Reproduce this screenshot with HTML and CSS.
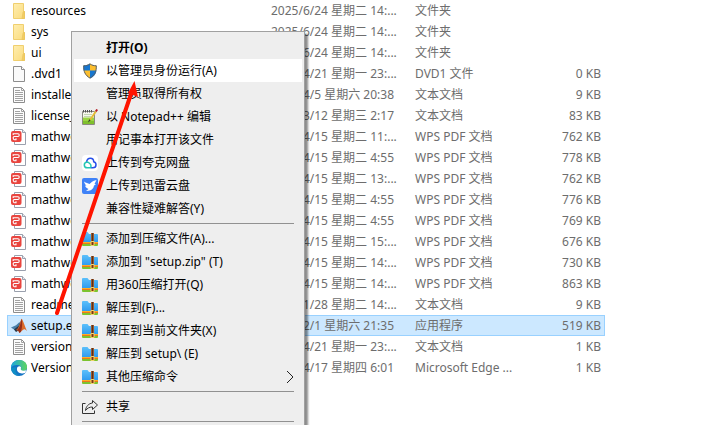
FILE: index.html
```html
<!DOCTYPE html>
<html lang="zh-CN">
<head>
<meta charset="utf-8">
<meta name="viewport" content="width=device-width, initial-scale=1">
<title>setup</title>
<link rel="stylesheet" href="styles.css">
</head>
<body>
<svg class="defs" aria-hidden="true">
  <defs>
    <linearGradient id="gFolder" x1="0" y1="0" x2="1" y2="1"><stop offset="0" stop-color="#ffeeb0"/><stop offset="1" stop-color="#fadb7c"/></linearGradient>
    <linearGradient id="gZip" x1="0" y1="0" x2="0" y2="1"><stop offset="0" stop-color="#5cc0fb"/><stop offset="1" stop-color="#2c98ee"/></linearGradient>
    <linearGradient id="gEdge" x1="0" y1="0" x2="1" y2="0"><stop offset="0" stop-color="#1ba6e0"/><stop offset="1" stop-color="#5dd55e"/></linearGradient>
    <symbol id="folder" viewBox="0 0 16 16"><path d="M2.500.5h10v8h1v7h-11z" fill="url(#gFolder)" stroke="#f0cf6e"/><path d="M12 9.500l-1 6h2.500v-7h-1z" fill="#f3cd62" stroke="#e8c25a" stroke-width=".6"/></symbol>
    <symbol id="file" viewBox="0 0 16 16"><path d="M2.500.5h8l3 3v12h-11z" fill="#fafafa" stroke="#8d8d8d"/><path d="M10.500.5v3h3" fill="#fff" stroke="#8d8d8d"/></symbol>
    <symbol id="text" viewBox="0 0 16 16"><path d="M2.500.5h8l3 3v12h-11z" fill="#fcfcfc" stroke="#8d8d8d"/><path d="M10.500.5v3h3M4 3.500h5M4 5.500h8M4 7.500h8M4 9.500h8M4 11.500h8M4 13.500h8" fill="none" stroke="#a2a2a2"/></symbol>
    <symbol id="pdf" viewBox="0 0 16 16"><path d="M3.500.5h8l3 3v12h-11z" fill="#fff" stroke="#9aa0ad"/><path d="M11.500.5v3h3" fill="#e8e8ee" stroke="#9aa0ad"/><rect x="0" y="2" width="10.500" height="11" rx="2" fill="#e9453f"/><path d="M2.200 6V4.700H7q1.200 0 1.200 1.400T7 7.500H3.400q-1.200 0-1.200 1.600t1.200 1.700H5V9.300" fill="none" stroke="#fff" stroke-width="1.100"/></symbol>
    <symbol id="matlab" viewBox="0 0 16 16"><path d="M0 9.500l5-2.300L8.500 4l1.500 3-4.500 6-2.500-1.500z" fill="#4a7fa8"/><path d="M3 11.500l5-4 2.500-6 1 4-4 7-2.500 1.500z" fill="#26384b"/><path d="M10.500.8c1.500 1 3 7 5.500 12.200-2-2.200-3-2.200-4.200-1l-3.300 3c-.8-2-2-2.800-3.500-3C8 11 9 4 10.500.8z" fill="#dc6c2b"/><path d="M10.500.8C9.700 4 9.500 9.500 6 12c1.500.5 2 1.500 2.500 3l1.500-1.300C11.500 9 11.500 4 10.500.8z" fill="#96301b"/></symbol>
    <symbol id="edge" viewBox="0 0 16 16"><circle cx="8" cy="8" r="8" fill="#1474c4"/><path d="M0 8C0 3 4 0 8 0c5 0 8 3 8 7 0 3-2 4-4 4-2 0-3-1-2-2 1-2-1-4-4-4C3 5 1 6 0 8z" fill="url(#gEdge)"/><path d="M6.500 7c2-1.500 3.800-.5 3.500 1-1 2 1 3.500 5.500 2.300L14 13c-1.500.5-2.500.7-4 .3-3.500-.5-5-3.800-3.500-6.300z" fill="#fff"/><path d="M5.500 7c-2 3-1 7 3 9C4 16 0 12 0 8z" fill="#108fc5"/></symbol>
    <symbol id="shield" viewBox="0 0 16 16"><path d="M8 .5c2 1.500 4 2 6.500 2 .2 6-1.500 10-6.500 13-5-3-6.700-7-6.500-13C4 2.500 6 2 8 .5z" fill="#fdbe2d"/><path d="M8 .5v7H1.500v-5C4 2.500 6 2 8 .5zM8 7.500h6.500c-.5 4-3 6.500-6.500 8z" fill="#1676cf"/><path d="M8 .9c2 1.500 4 1.800 6.300 1.900.2 5.700-1.500 9.600-6.300 12.300C3.200 12.400 1.500 8.500 1.700 2.800 4 2.700 6 2.400 8 .9z" fill="none" stroke="#56606a"/></symbol>
    <symbol id="notepad" viewBox="0 0 16 16"><path d="M.5 2.500h12v13H.5z" fill="#f7f8ed" stroke="#8a8a80"/><path d="M1 8.500h11V15H1z" fill="#9cd642"/><path d="M1 12h11v3H1z" fill="#7fc02c"/><path d="M2 5.500h8M2 7.500h7" stroke="#c4d6b2"/><path d="M1.500 1v2.500M3.500 1v2.500M5.500 1v2.500M7.500 1v2.500M9.500 1v2.500" stroke="#555"/><path d="M13.800 2.500L8 11" stroke="#e5bd36" stroke-width="2"/><path d="M13.800 2.500L15.200.5" stroke="#b51d25" stroke-width="2"/><path d="M7.200 10.300L6 13.500l2.700-2.200z" fill="#333"/></symbol>
    <symbol id="quark" viewBox="0 0 16 16"><rect width="16" height="16" rx="4" fill="#fff"/><path d="M4.500 7C5 4.500 6.500 3.200 8.300 3.200c2 0 3.400 1.500 3.400 3.500 1.700.5 2.300 1.700 2.300 3 0 2-1.400 3.100-3.200 3.100H8.500" fill="none" stroke="#264fe9" stroke-width="1.500"/><path d="M5 7C3 7.300 2.300 8.500 2.300 9.900c0 1.800 1.400 2.900 3 2.900H8c1.500-.5 1.300-3-.3-4.300C6.800 7.500 6 7 5 7z" fill="none" stroke="#24c6b4" stroke-width="1.500"/></symbol>
    <symbol id="xunlei" viewBox="0 0 16 16"><rect width="16" height="16" rx="2" fill="#3f82f7"/><path d="M2 3.500c2 1.500 4 1.800 5.500 2.500C9 4.500 10.500 3 14.500 2L12.500 6l1.500.5-2 1c-.3 3-2.200 4.800-5.500 5.300l-2.500.2 2.500-2C4.500 10.300 3.300 9 3 7.500l1.500.3C3.200 6.500 2.300 5 2 3.500z" fill="#fff"/></symbol>
    <symbol id="zip" viewBox="0 0 16 16"><path d="M0 2q0-1 1-1h4.500L7 3h8q1 0 1 1v8H0z" fill="url(#gZip)"/><path d="M0 11h16v1.500H0z" fill="#ffad22"/><path d="M0 12h16v1H0z" fill="#e9781d"/><path d="M0 13h16v1q0 1-1 1H1q-1 0-1-1z" fill="#7cc32f"/><path d="M9 2h3v12H9z" fill="#a05a2c"/><path d="M10.500 2v8" stroke="#58301c"/><rect x="8.500" y="10" width="4" height="5" rx="1" fill="#f5d46c"/><rect x="9.500" y="11" width="2" height="3" fill="#7b3510"/></symbol>
    <symbol id="share" viewBox="0 0 16 16"><path d="M3.500 4.500h-3v10h12v-3" fill="none" stroke="#333"/><path d="M10.500 1.500l5 4.500-5 4.500V8c-3 0-5 1-7 3.500.5-4 3-7 7-7.500z" fill="none" stroke="#333" stroke-linejoin="round"/></symbol>
  </defs>
</svg>
<main class="explorer">
  <table class="files">
    <colgroup><col class="c-name"><col class="c-date"><col class="c-type"><col class="c-size"></colgroup>
    <tbody>
      <tr><td><svg class="icon"><use href="#folder"/></svg>resources</td><td>2025/6/24 星期二 14:...</td><td>文件夹</td><td></td></tr>
      <tr><td><svg class="icon"><use href="#folder"/></svg>sys</td><td>2025/6/24 星期二 14:...</td><td>文件夹</td><td></td></tr>
      <tr><td><svg class="icon"><use href="#folder"/></svg>ui</td><td>2025/6/24 星期二 14:...</td><td>文件夹</td><td></td></tr>
      <tr><td><svg class="icon"><use href="#file"/></svg>.dvd1</td><td>2025/4/21 星期一 23:...</td><td>DVD1 文件</td><td>0 KB</td></tr>
      <tr><td><svg class="icon"><use href="#text"/></svg>installer</td><td>2025/4/5 星期六 20:38</td><td>文本文档</td><td>9 KB</td></tr>
      <tr><td><svg class="icon"><use href="#text"/></svg>license_</td><td>2025/3/12 星期三 2:17</td><td>文本文档</td><td>83 KB</td></tr>
      <tr><td><svg class="icon"><use href="#pdf"/></svg>mathworks</td><td>2025/4/15 星期二 11:...</td><td>WPS PDF 文档</td><td>762 KB</td></tr>
      <tr><td><svg class="icon"><use href="#pdf"/></svg>mathworks</td><td>2025/4/15 星期二 4:55</td><td>WPS PDF 文档</td><td>778 KB</td></tr>
      <tr><td><svg class="icon"><use href="#pdf"/></svg>mathworks</td><td>2025/4/15 星期二 13:...</td><td>WPS PDF 文档</td><td>762 KB</td></tr>
      <tr><td><svg class="icon"><use href="#pdf"/></svg>mathworks</td><td>2025/4/15 星期二 4:55</td><td>WPS PDF 文档</td><td>776 KB</td></tr>
      <tr><td><svg class="icon"><use href="#pdf"/></svg>mathworks</td><td>2025/4/15 星期二 4:55</td><td>WPS PDF 文档</td><td>769 KB</td></tr>
      <tr><td><svg class="icon"><use href="#pdf"/></svg>mathworks</td><td>2025/4/15 星期二 15:...</td><td>WPS PDF 文档</td><td>676 KB</td></tr>
      <tr><td><svg class="icon"><use href="#pdf"/></svg>mathworks</td><td>2025/4/15 星期二 14:...</td><td>WPS PDF 文档</td><td>730 KB</td></tr>
      <tr><td><svg class="icon"><use href="#pdf"/></svg>mathworks</td><td>2025/4/15 星期二 14:...</td><td>WPS PDF 文档</td><td>863 KB</td></tr>
      <tr><td><svg class="icon"><use href="#text"/></svg>readme</td><td>2025/1/28 星期二 14:...</td><td>文本文档</td><td>9 KB</td></tr>
      <tr class="selected"><td><svg class="icon"><use href="#matlab"/></svg>setup.exe</td><td>2025/2/1 星期六 21:35</td><td>应用程序</td><td>519 KB</td></tr>
      <tr><td><svg class="icon"><use href="#text"/></svg>version</td><td>2025/4/21 星期一 23:...</td><td>文本文档</td><td>1 KB</td></tr>
      <tr><td><svg class="icon"><use href="#edge"/></svg>Version</td><td>2025/4/17 星期四 6:01</td><td>Microsoft Edge ...</td><td>1 KB</td></tr>
    </tbody>
  </table>
</main>
<div class="menu" role="menu">
  <button class="item default" role="menuitem"><span class="icon"></span>打开(O)</button>
  <button class="item active" role="menuitem"><svg class="icon"><use href="#shield"/></svg>以管理员身份运行(A)</button>
  <button class="item" role="menuitem"><span class="icon"></span>管理员取得所有权</button>
  <button class="item" role="menuitem"><svg class="icon"><use href="#notepad"/></svg>以 Notepad++ 编辑</button>
  <button class="item" role="menuitem"><span class="icon"></span>用记事本打开该文件</button>
  <button class="item" role="menuitem"><svg class="icon"><use href="#quark"/></svg>上传到夸克网盘</button>
  <button class="item" role="menuitem"><svg class="icon"><use href="#xunlei"/></svg>上传到迅雷云盘</button>
  <button class="item" role="menuitem"><span class="icon"></span>兼容性疑难解答(Y)</button>
  <hr class="rule">
  <button class="item" role="menuitem"><svg class="icon"><use href="#zip"/></svg>添加到压缩文件(A)...</button>
  <button class="item" role="menuitem"><svg class="icon"><use href="#zip"/></svg>添加到 "setup.zip" (T)</button>
  <button class="item" role="menuitem"><svg class="icon"><use href="#zip"/></svg>用360压缩打开(Q)</button>
  <button class="item" role="menuitem"><svg class="icon"><use href="#zip"/></svg>解压到(F)...</button>
  <button class="item" role="menuitem"><svg class="icon"><use href="#zip"/></svg>解压到当前文件夹(X)</button>
  <button class="item" role="menuitem"><svg class="icon"><use href="#zip"/></svg>解压到 setup\ (E)</button>
  <button class="item" role="menuitem"><svg class="icon"><use href="#zip"/></svg>其他压缩命令<svg class="chevron" viewBox="0 0 8 14"><path d="M1 1l6 6-6 6"/></svg></button>
  <hr class="rule">
  <button class="item" role="menuitem"><svg class="icon"><use href="#share"/></svg>共享</button>
  <hr class="rule">
</div>
<svg class="arrow" viewBox="0 0 90 240" aria-hidden="true"><path d="M7 237L81 18" stroke="#ff1400" stroke-width="4" stroke-linecap="round"/><path d="M84.500 5l3.500 16-10-4z" fill="#ff1400"/></svg>
</body>
</html>
```
FILE: styles.css
```css
* {
  box-sizing: border-box;
}

body {
  margin: 0;
  min-height: 100vh;
  position: relative;
  overflow: hidden;
  background: #fff;
  color: #000;
  font: 12px/20px "Noto Sans", "Noto Sans CJK SC", sans-serif;
}

.defs {
  position: absolute;
  width: 0;
  height: 0;
}

.icon {
  flex: none;
  width: 16px;
  height: 16px;
}

.explorer {
  padding: 0 96px 0 7px;
}

.files {
  width: 100%;
  table-layout: fixed;
  border-collapse: collapse;
}

.c-name {
  width: 260px;
}

.c-date {
  width: 144px;
}

.c-type {
  width: 112px;
}

.files td {
  height: 21px;
  padding: 0 4px;
  overflow: hidden;
  white-space: nowrap;
  color: #6d6d6d;
}

.files td:first-child {
  color: #000;
}

.files td:last-child {
  text-align: right;
}

.files .icon {
  margin: 0 4px 0 0;
  vertical-align: middle;
}

.selected {
  background: #cce8ff;
  outline: 1px solid #99d1ff;
  outline-offset: -1px;
}

.menu {
  position: absolute;
  top: 31px;
  left: 71px;
  width: 234px;
  padding: 4px 2px 0;
  border: 1px solid #a0a0a0;
  border-bottom: 0;
  background: #eee;
  box-shadow: 3px 3px 2px rgba(0, 0, 0, 0.45);
}

.item {
  display: flex;
  align-items: center;
  gap: 8px;
  width: 100%;
  height: 23px;
  padding: 0 8px;
  border: 0;
  background: none;
  color: #000;
  font: inherit;
  text-align: left;
  white-space: nowrap;
}

.item.default {
  font-weight: 700;
}

.item.active {
  background: #fff;
}

.rule {
  height: 1px;
  margin: 3px 8px;
  border: 0;
  background: #919191;
}

.chevron {
  width: 8px;
  height: 14px;
  margin-left: auto;
  fill: none;
  stroke: #222;
}

.arrow {
  position: absolute;
  top: 76px;
  left: 50px;
  width: 90px;
  height: 240px;
  fill: none;
  pointer-events: none;
}
```
